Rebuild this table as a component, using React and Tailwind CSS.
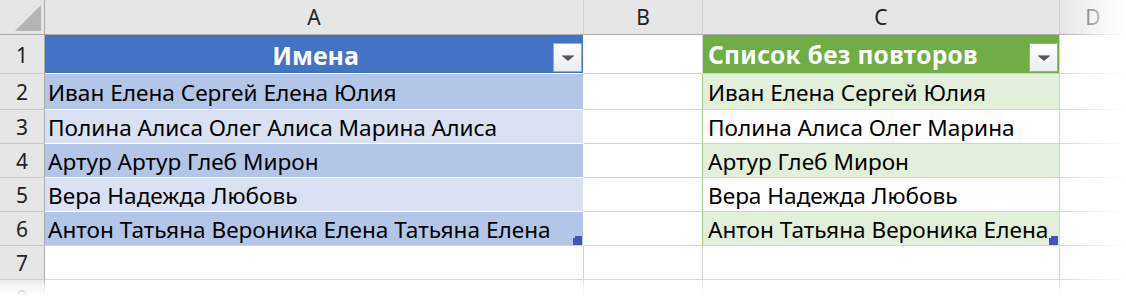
import React from 'react';

// --- sheet data ---
const names = [
  'Иван Елена Сергей Елена Юлия',
  'Полина Алиса Олег Алиса Марина Алиса',
  'Артур Артур Глеб Мирон',
  'Вера Надежда Любовь',
  'Антон Татьяна Вероника Елена Татьяна Елена',
];

const unique = [
  'Иван Елена Сергей Юлия',
  'Полина Алиса Олег Марина',
  'Артур Глеб Мирон',
  'Вера Надежда Любовь',
  'Антон Татьяна Вероника Елена',
];

const columns = ['A', 'B', 'C', 'D'];

// --- small pieces ---

const FilterButton = () => (
  <div className="absolute right-[1px] bottom-[1px] w-[29px] h-[29px] border border-[#a3a8b2] bg-gradient-to-b from-white to-[#e9ecf1] flex items-center justify-center">
    <svg width="12" height="6" viewBox="0 0 12 6">
      <rect x="0" y="0" width="12" height="1" fill="#9a9a9a" />
      <polygon points="0,1 12,1 6,6" fill="#555" />
    </svg>
  </div>
);

const ResizeHandle = () => (
  <svg className="absolute right-[1px] bottom-0" width="9" height="9" viewBox="0 0 9 9">
    <polygon points="2,0 9,0 9,9 0,9 0,2 2,2" fill="#4454b8" />
  </svg>
);

const ColHeader = ({ children, className = '' }) => (
  <div className={`bg-[#e6e6e6] border-r border-b border-r-[#d2d2d2] border-b-[#ababab] flex items-center justify-center pt-[2px] text-[21px] text-[#222] ${className}`}>
    {children}
  </div>
);

const RowHeader = ({ children }) => (
  <div className="bg-[#e6e6e6] border-r border-b border-r-[#ababab] border-b-[#c6c6c6] flex items-center justify-center pt-[3px] text-[21px] text-[#222]">
    {children}
  </div>
);

const Cell = ({ children, className = '' }) => (
  <div className={`relative border-r border-b border-[#d4d4d4] flex items-center pl-[3px] pt-[3px] whitespace-nowrap overflow-visible ${className}`}>
    {children}
  </div>
);

// --- sheet ---

const Sheet = () => (
  <div
    className="grid grid-cols-[45px_539px_119px_357px_1fr] grid-rows-[35px_39px_36px_34px_34px_34px_34px_34px_1fr] h-full text-[22.6px] text-black"
    style={{ fontFamily: '"Noto Sans", "Open Sans", sans-serif' }}
  >
    {/* corner */}
    <div className="bg-[#e6e6e6] border-r border-b border-[#ababab] relative">
      <svg className="absolute left-[15px] top-[5px]" width="27" height="26" viewBox="0 0 27 26">
        <polygon points="0,26 26,0 26,26" fill="#b4b4b4" />
      </svg>
    </div>
    {columns.map((c) => (
      <ColHeader key={c} className={c === 'D' ? 'border-r-0' : ''}>
        {c}
      </ColHeader>
    ))}

    {/* row 1: table headers */}
    <RowHeader>1</RowHeader>
    <Cell className="bg-[#4472c4] border-white justify-center pl-0">
      <span className="text-white font-bold text-[25px]">Имена</span>
      <FilterButton />
    </Cell>
    <Cell />
    <Cell className="bg-[#70ad47] border-[#a9d08e] pl-[5px]">
      <span className="text-white font-bold text-[24.5px] tracking-[0.3px]">Список без повторов</span>
      <FilterButton />
    </Cell>
    <Cell className="border-r-0" />

    {/* rows 2-6 */}
    {names.map((name, i) => {
      const odd = i % 2 === 0;
      const last = i === names.length - 1;
      return (
        <React.Fragment key={i}>
          <RowHeader>{i + 2}</RowHeader>
          <Cell className={`${odd ? 'bg-[#b4c6e7]' : 'bg-[#d9e1f2]'} border-r-white ${last ? 'border-b-[#d4d4d4]' : 'border-b-white'}`}>
            {name}
            {last && <ResizeHandle />}
          </Cell>
          <Cell className="border-r-[#a9d08e]" />
          <Cell className={`${odd ? 'bg-[#e2efda]' : 'bg-white'} border-[#a9d08e] pl-[5px]`}>
            {unique[i]}
            {last && <ResizeHandle />}
          </Cell>
          <Cell className="border-r-0" />
        </React.Fragment>
      );
    })}

    {/* rows 7-8 */}
    {[7, 8].map((n) => (
      <React.Fragment key={n}>
        <RowHeader>{n}</RowHeader>
        <Cell />
        <Cell />
        <Cell />
        <Cell className="border-r-0" />
      </React.Fragment>
    ))}
  </div>
);

export default function App() {
  return (
    <div className="relative w-[1126px] h-[296px] overflow-hidden bg-white">
      <Sheet />
      {/* torn-edge fade on the right and bottom */}
      <div className="absolute top-0 right-0 w-[66px] h-full bg-gradient-to-r from-white/0 via-white/60 to-white pointer-events-none" />
      <div className="absolute left-0 bottom-0 w-full h-[18px] bg-gradient-to-b from-white/0 via-white/70 to-white pointer-events-none" />
    </div>
  );
}
